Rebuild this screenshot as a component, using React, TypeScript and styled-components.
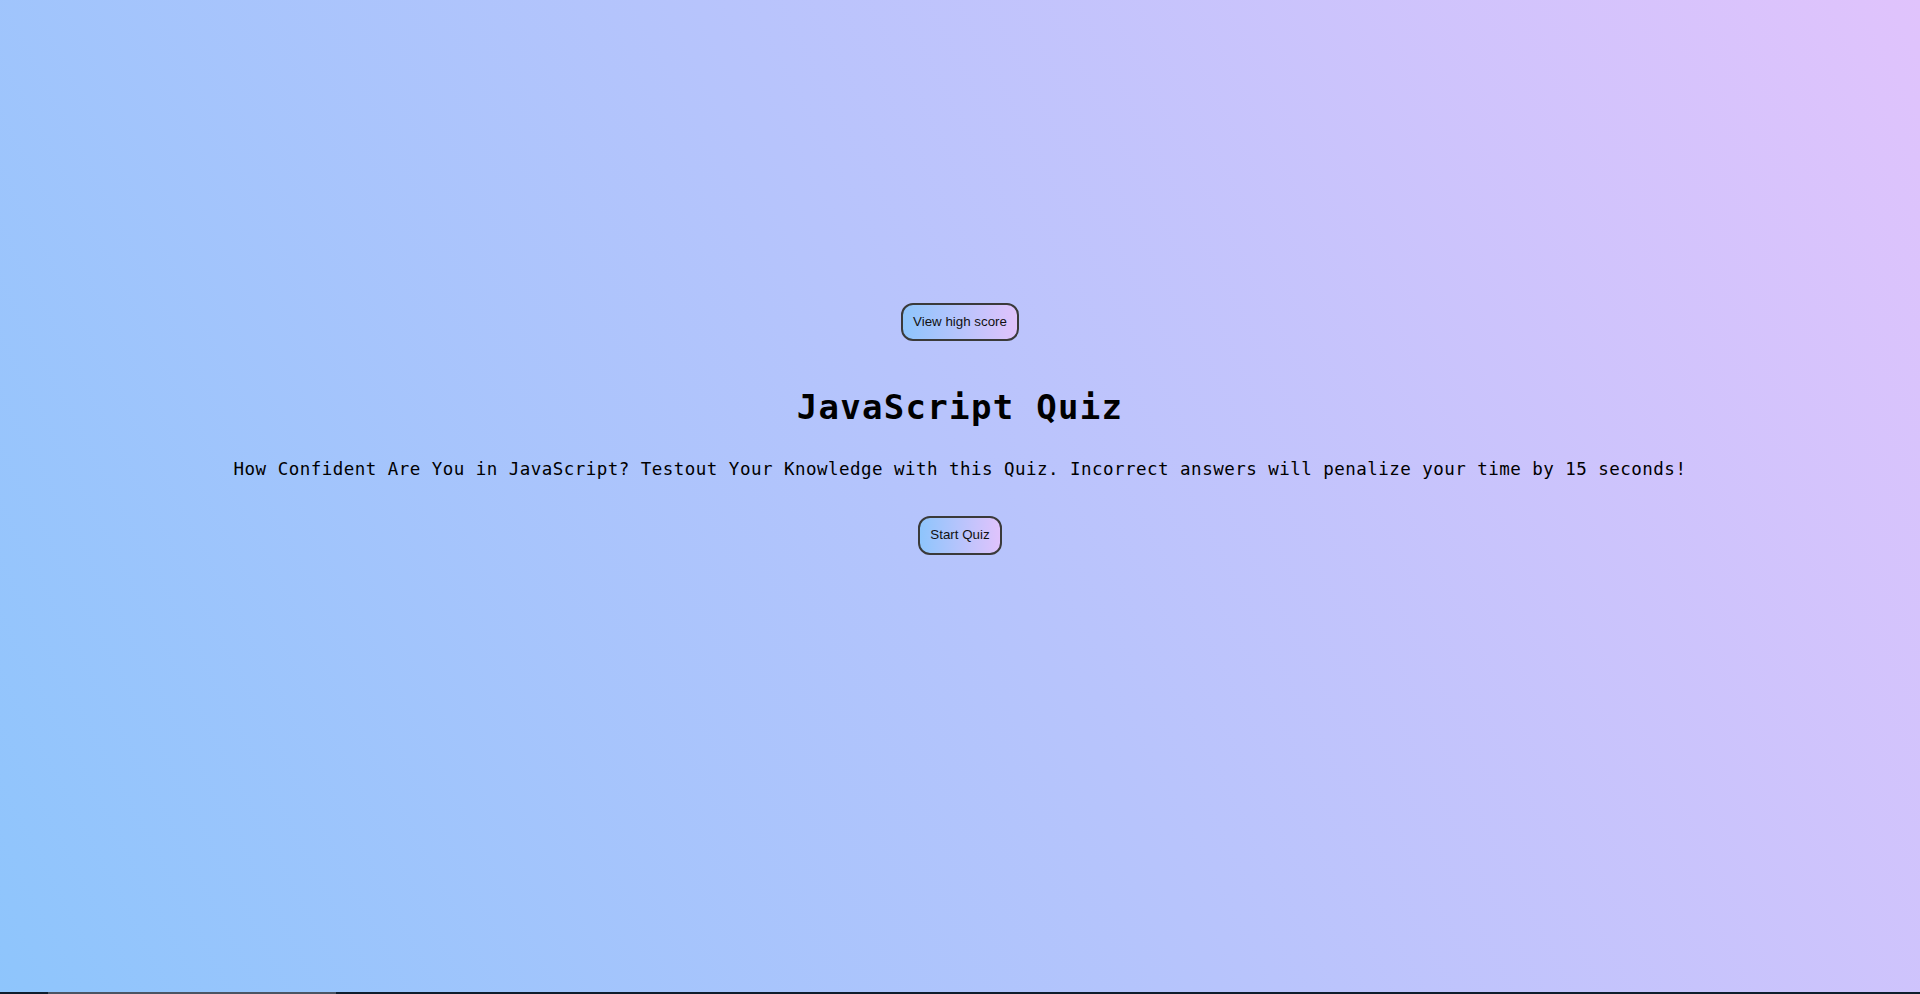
import React from "react";
import styled, { createGlobalStyle } from "styled-components";

const GlobalStyle = createGlobalStyle`
  html, body {
    margin: 0;
    padding: 0;
    height: 100%;
  }
  body {
    font-family: "DejaVu Sans Mono", "Liberation Mono", monospace;
    background-image: linear-gradient(62deg, #8ec5fc 0%, #e0c3fc 100%);
    background-attachment: fixed;
    min-height: 100vh;
    overflow: hidden;
  }
`;

const Page = styled.div`
  display: flex;
  flex-direction: column;
  height: 100vh;
`;

const Main = styled.main`
  flex: 1;
  display: flex;
  flex-direction: column;
  align-items: center;
  padding-top: 303px;
  box-sizing: border-box;
`;

const PillButton = styled.button`
  font-family: "Liberation Sans", Arial, sans-serif;
  font-size: 13.33px;
  line-height: 14px;
  color: #111;
  padding: 10px 10px;
  border: 2px solid #3a3a3a;
  border-radius: 12px;
  background-image: linear-gradient(90deg, #8ec5fc 0%, #e0c3fc 100%);
  cursor: pointer;
`;

const Title = styled.h1`
  margin: 45px 0 0;
  font-family: "DejaVu Sans Mono", "Liberation Mono", monospace;
  font-size: 34px;
  line-height: 42px;
  font-weight: bold;
  letter-spacing: 1.3px;
  color: #000;
`;

const Intro = styled.p`
  margin: 29px 0 0;
  font-size: 17.5px;
  line-height: 24px;
  letter-spacing: 0.47px;
  color: #000;
  text-align: center;
`;

const StartButton = styled(PillButton)`
  margin-top: 35px;
  padding: 10px 10px 11px;
`;

const BottomStrip = styled.div`
  height: 2px;
  background: #0f1e2d;
  display: flex;
`;

const StripSegment = styled.div`
  margin-left: 48px;
  width: 288px;
  background: #4b5563;
`;

export default function App() {
  return (
    <>
      <GlobalStyle />
      <Page>
        <Main>
          <PillButton>View high score</PillButton>
          <Title>JavaScript Quiz</Title>
          <Intro>
            How Confident Are You in JavaScript? Testout Your Knowledge with this Quiz. Incorrect answers will penalize your time by 15 seconds!
          </Intro>
          <StartButton>Start Quiz</StartButton>
        </Main>
        <BottomStrip>
          <StripSegment />
        </BottomStrip>
      </Page>
    </>
  );
}
